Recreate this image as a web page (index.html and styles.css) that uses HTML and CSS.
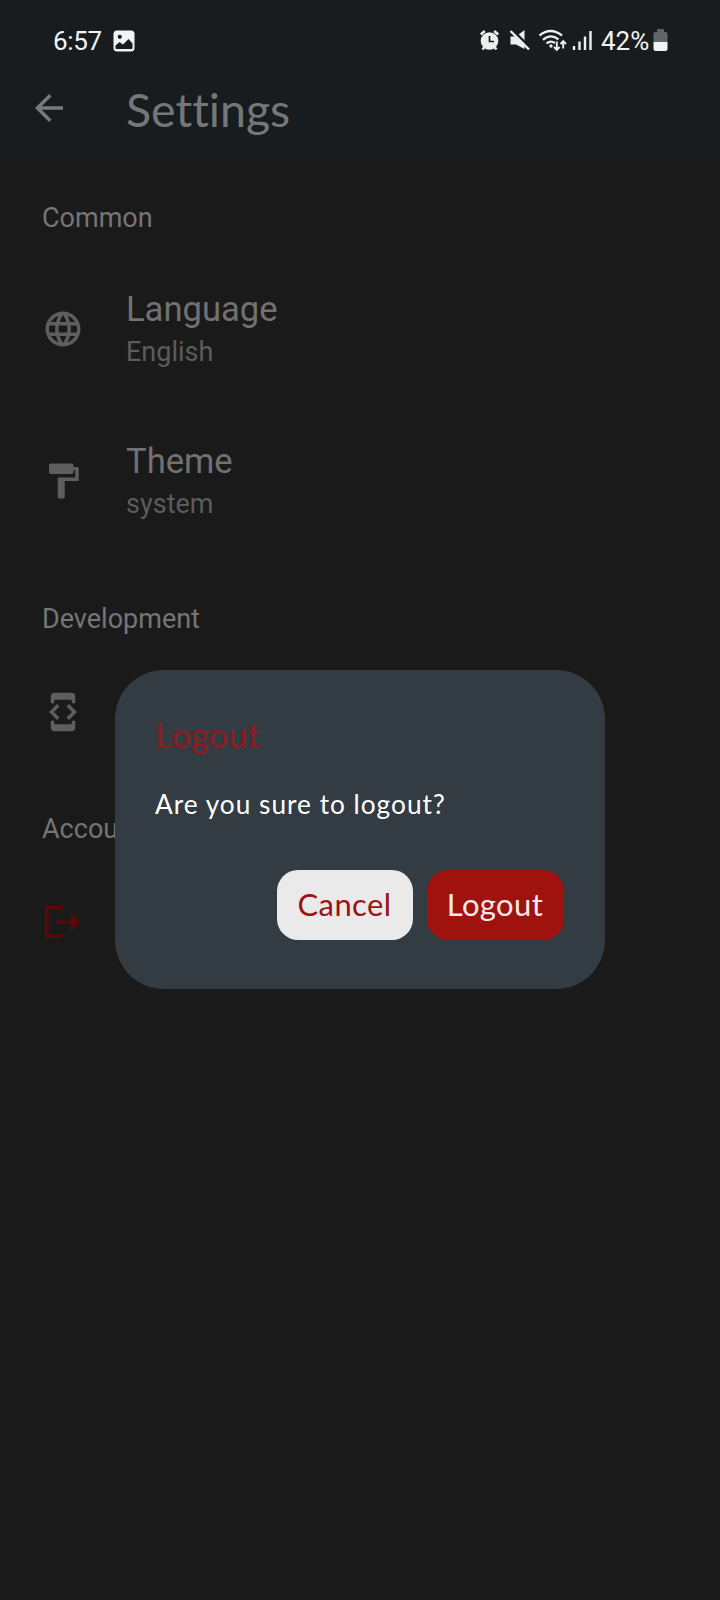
FILE: index.html
```html
<!DOCTYPE html>
<html lang="en">
<head>
<meta charset="utf-8">
<title>Settings</title>
<link rel="stylesheet" href="styles.css">
</head>
<body>
<div class="screen">
  <header class="header">
    <div class="status">
      <span class="time">6:57</span>
      <svg class="photo" width="22" height="22" viewBox="0 0 22 22"><rect x="0.5" y="0.5" width="21" height="21" rx="3.5" fill="#f2f3f4"/><circle cx="6.8" cy="6.8" r="2.1" fill="#181c1f"/><path d="M2.500 15.500 6.500 12l3.500 2.500L15.500 9l4 4.500V18q0 1-1 1h-15q-1 0-1-1z" fill="#181c1f"/></svg>
      <svg class="indicators" width="114" height="24" viewBox="0 0 114 24" fill="none" stroke="#eceeef">
        <circle cx="9.500" cy="12" r="8.800" fill="#eceeef" stroke="none"/>
        <path d="M.8 5.500 4.800 2M18.200 5.500 14.200 2M4.500 18 2.500 20.500M14.500 18l2 2.500" stroke-width="2.500"/>
        <path d="M9.500 7v5.500h4.500" stroke="#181c1f" stroke-width="1.700"/>
        <path d="M30.500 7.500h5.500L44.500 1v19L36 15.500h-5.500z" fill="#eceeef" stroke="none"/>
        <path d="M31.500 0 51.500 20" stroke="#181c1f" stroke-width="2.500"/>
        <path d="M30.500 2 49 20.500" stroke-width="2.400"/>
        <path d="M59.500 6.500Q70.500-2.500 82 6.500M63 10.800q7.500-6.500 15.500-.5M66.500 14.500q4-3.500 8.500-.5" stroke-width="2.300"/>
        <circle cx="71" cy="17" r="1.700" fill="#eceeef" stroke="none"/>
        <path d="M76.800 12.500v8M74 18l2.800 2.800L79.600 18M83.200 19.500v-7M80.500 15l2.700-2.800L86 15" stroke-width="1.900"/>
        <path d="M94 17v4M99.500 12.500V21M105 7.500V21M110.500 2v19" stroke-width="2.400"/>
      </svg>
      <span class="percent">42%</span>
      <svg class="battery" width="15" height="23" viewBox="0 0 15 23"><path d="M4 1q0-1 1-1h5q1 0 1 1v2h1.500q2 0 2 2v8H.5V5q0-2 2-2H4z" fill="#626568"/><path d="M.5 13h14v7q0 2-2 2h-10q-2 0-2-2z" fill="#f2f3f4"/></svg>
    </div>
    <div class="appbar">
      <svg class="icon" viewBox="0 0 24 24"><path d="M20 11H7.830l5.590-5.590L12 4l-8 8 8 8 1.410-1.410L7.830 13H20v-2z"/></svg>
      <h1 class="title">Settings</h1>
    </div>
  </header>
  <main class="list">
    <h2 class="section">Common</h2>
    <div class="row row-language">
      <svg class="icon" viewBox="0 0 24 24"><path d="M11.990 2C6.470 2 2 6.480 2 12s4.470 10 9.990 10C17.520 22 22 17.520 22 12S17.520 2 11.990 2zm6.930 6h-2.950c-.32-1.250-.78-2.450-1.380-3.560 1.840.63 3.370 1.910 4.330 3.560zM12 4.040c.83 1.200 1.480 2.530 1.910 3.960h-3.820c.43-1.430 1.080-2.760 1.910-3.960zM4.260 14C4.100 13.360 4 12.690 4 12s.1-1.360.26-2h3.380c-.08.66-.14 1.320-.14 2s.06 1.340.14 2H4.260zm.82 2h2.950c.32 1.250.78 2.450 1.380 3.560-1.840-.63-3.370-1.900-4.330-3.560zm2.950-8H5.080c.96-1.660 2.490-2.930 4.330-3.560C8.810 5.550 8.350 6.750 8.030 8zM12 19.960c-.83-1.200-1.480-2.530-1.910-3.960h3.820c-.43 1.430-1.080 2.760-1.910 3.960zM14.340 14H9.660c-.09-.66-.16-1.320-.16-2s.07-1.350.16-2h4.680c.09.65.16 1.320.16 2s-.07 1.340-.16 2zm.25 5.560c.6-1.110 1.060-2.310 1.380-3.560h2.950c-.96 1.650-2.490 2.930-4.330 3.560zM16.360 14c.08-.66.14-1.320.14-2s-.06-1.340-.14-2h3.380c.16.64.26 1.310.26 2s-.1 1.360-.26 2h-3.380z"/></svg>
      <div class="text"><span class="name">Language</span><span class="value">English</span></div>
    </div>
    <div class="row row-theme">
      <svg class="icon" viewBox="0 0 24 24"><path d="M18 4V3c0-.55-.45-1-1-1H5c-.55 0-1 .45-1 1v4c0 .55.45 1 1 1h12c.55 0 1-.45 1-1V6h1v4H9v11c0 .55.45 1 1 1h2c.55 0 1-.45 1-1v-9h8V4h-3z"/></svg>
      <div class="text"><span class="name">Theme</span><span class="value">system</span></div>
    </div>
    <h2 class="section section-development">Development</h2>
    <div class="row">
      <svg class="icon" viewBox="0 0 24 24"><path d="M7 5h10v2h2V3c0-1.100-.9-1.990-2-1.990L7 1c-1.100 0-2 .9-2 2v4h2V5zm8.410 11.590L20 12l-4.590-4.590L14 8.830 17.170 12 14 15.170l1.410 1.420zM10 15.170L6.830 12 10 8.830 8.590 7.410 4 12l4.590 4.590L10 15.170zM17 19H7v-2H5v4c0 1.100.9 2 2 2h10c1.100 0 2-.9 2-2v-4h-2v2z"/></svg>
    </div>
    <h2 class="section section-account">Account</h2>
    <div class="row">
      <svg class="icon icon-logout" viewBox="0 0 42 42"><path d="M21 5H3v32h18v-3.500H6.500v-25H21z"/><path d="M14 19.500h15V12l9.500 9-9.500 9v-7.500H14z"/></svg>
    </div>
  </main>
  <div class="dialog" role="dialog">
    <h3 class="dialog-title">Logout</h3>
    <p class="dialog-text">Are you sure to logout?</p>
    <div class="actions">
      <button class="button cancel">Cancel</button>
      <button class="button confirm">Logout</button>
    </div>
  </div>
</div>
</body>
</html>
```
FILE: styles.css
```css
* { box-sizing: border-box; margin: 0; }
body { background: #1a1a1a; font-family: Roboto, sans-serif; }
h1, h2, h3 { font-weight: 400; }
svg { display: block; flex: none; }
.screen { position: relative; width: 720px; height: 1600px; overflow: hidden; background: #1a1a1a; }
.header { height: 152px; background: #181c1f; }
.status { display: flex; align-items: center; height: 64px; padding: 17px 51px 0 53px; color: #f2f3f4; font-size: 26px; line-height: 32px; }
.time { width: 60px; letter-spacing: -0.3px; white-space: nowrap; }
.indicators { margin-left: 345px; }
.percent { margin-left: 7px; width: 52px; }
.appbar { display: flex; align-items: center; height: 88px; padding: 0 28px; }
.appbar .icon { fill: #77797b; }
.title { margin-left: 56px; padding-top: 2px; font: 400 46.5px/56px Lato, sans-serif; font-variant-ligatures: none; color: #747678; }
.list { padding: 50px 42px 0; }
.section { font-size: 27px; line-height: 32px; color: #757575; }
.section-development { margin-top: 82px; }
.section-account { margin-top: 61px; }
.row { display: flex; align-items: center; height: 80px; margin-top: 37px; }
.row-language { margin-top: 55px; }
.row-theme { margin-top: 72px; }
.icon { width: 42px; height: 42px; fill: #5e5e5e; }
.icon-logout { fill: #5b0808; }
.text { display: flex; flex-direction: column; gap: 6px; margin: -2px 0 0 42px; }
.name { font-size: 34.600px; line-height: 42px; color: #717171; }
.value { font-size: 27px; line-height: 32px; color: #5c5c5c; }
.dialog { position: absolute; left: 115px; top: 669.5px; width: 490px; height: 319px; padding: 44px 41.500px 48px 40px; border-radius: 49px; background: #333b43; font-family: Lato, sans-serif; }
.dialog-title { font-size: 34.500px; line-height: 42px; color: #8f1a20; }
.dialog-text { margin-top: 31px; font-size: 26.25px; line-height: 34px; letter-spacing: 1px; color: #fff; }
.actions { display: flex; justify-content: flex-end; gap: 14px; margin-top: 49.5px; }
.button { height: 70px; padding: 0 0 2px; border: 0; border-radius: 21px; font: 400 31px/38px Lato, sans-serif; letter-spacing: 0.4px; }
.cancel { width: 136px; background: #eaeaea; color: #9e1216; }
.confirm { width: 137px; background: #9f120e; color: #f7e9e9; }
```
